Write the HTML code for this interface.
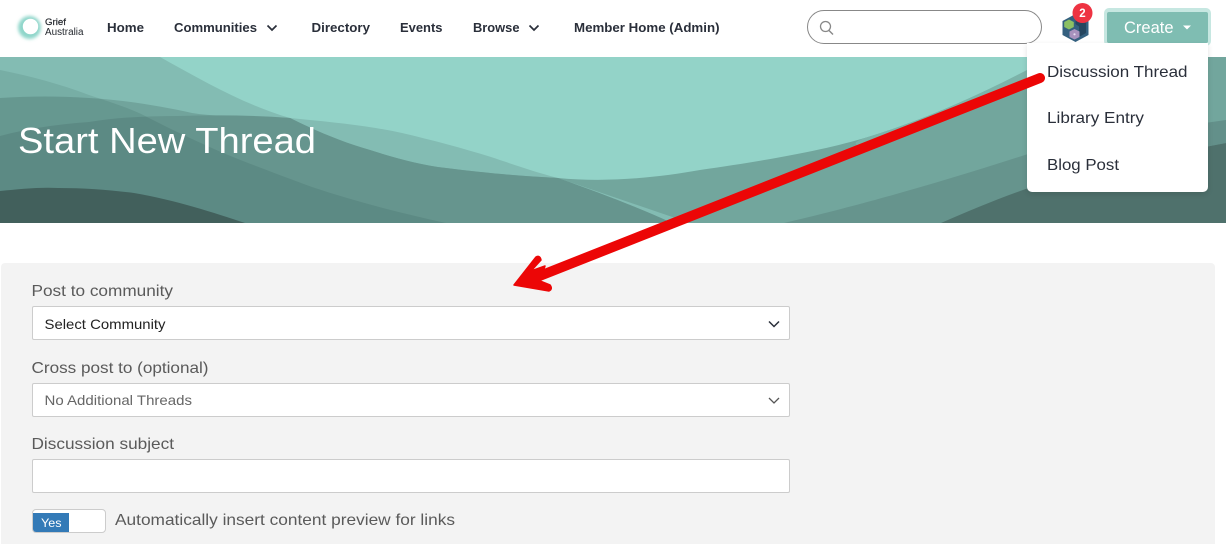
<!DOCTYPE html>
<html lang="en"><head><meta charset="utf-8"><title>Start New Thread</title>
<style>
html,body{margin:0;padding:0;background:#fff;width:1226px;height:544px;overflow:hidden;font-family:"Liberation Sans",sans-serif}
.a{position:absolute;box-sizing:border-box}
svg{position:absolute;left:0;top:0}
</style></head><body>
<svg width="1226" height="166" style="top:57px" viewBox="0 57 1226 166">
<rect x="0" y="57" width="1226" height="166" fill="#93d3c8"/>
<!-- right side below the light area -->
<path d="M558 178C610 183 660 177 700 170C770 160 825 150 868 137C930 118 985 92 1035 66L1050 57H1226V223H640Z" fill="#72a69d"/>
<path d="M860 146C930 125 985 100 1040 76V66L1035 66C985 92 930 118 868 137C855 141 852 144 860 146Z" fill="#7cb3a9"/>
<path d="M784 223C850 208 950 180 1040 150V223Z" fill="#66948d"/>
<path d="M941 223C975 208 1005 196 1040 184V223Z" fill="#4f716c"/>
<path d="M1030 150H1208V223H1030Z" fill="#4f716c"/>
<path d="M1205 57H1226V120L1205 123Z" fill="#72a69d"/>
<path d="M1205 123L1226 120V143L1205 147Z" fill="#63908a"/>
<path d="M1205 147L1226 143V223H1205Z" fill="#4f716c"/>
<!-- left: mid teal -->
<path d="M160 57C205 82 245 105 290 118C330 122 365 125 402 133C432 140 462 148 491 157C515 165 535 172 558 178L690 223H0V57Z" fill="#83bcb3"/>
<!-- layer L3 -->
<path d="M0 98C30 96 60 96 89 98C125 100 160 106 192 113C225 118 258 116 290 118C316 131 342 142 370 150C395 158 420 165 446 168C485 173 520 176 558 178C600 193 640 208 672 223H0Z" fill="#71a49c"/>
<!-- W wave -->
<path d="M0 136C30 128 60 124 89 122C120 117 150 116 178 116C215 115 252 115 290 118C316 131 342 142 370 150C395 158 420 165 446 168C485 173 520 176 558 178C600 193 640 208 672 223H0Z" fill="#66958e"/>
<!-- diagonal shade at the left -->
<path d="M0 70C30 76 60 84 89 95C110 102 130 108 147 117C172 130 198 142 223 153C255 166 285 177 312 187C357 202 400 213 446 223H0Z" fill="#002020" opacity=".09"/>
<path d="M0 191C20 189 40 187 58 188C85 188 110 190 134 193C175 200 215 213 245 223H0Z" fill="#42605c"/>
</svg>

<div class="a" style="left:1px;top:263px;width:1214px;height:281px;background:#f3f3f3;border-radius:4px 4px 0 0"></div>
<div class="a" style="left:32px;top:306px;width:758px;height:34px;background:#fff;border:1px solid #ccc;border-radius:2px"></div>
<div class="a" style="left:32px;top:383px;width:758px;height:34px;background:#fff;border:1px solid #ccc;border-radius:2px"></div>
<div class="a" style="left:32px;top:459px;width:758px;height:34px;background:#fff;border:1px solid #ccc;border-radius:2px"></div>
<div class="a" style="left:32px;top:509px;width:74px;height:24px;background:#fff;border:1px solid #ccc;border-radius:4px"></div>
<div class="a" style="left:33px;top:513px;width:36px;height:19px;background:#337ab7;border-radius:0 0 0 3px"></div>

<div class="a" style="left:807px;top:10px;width:235px;height:34px;background:#fff;border:1px solid #888;border-radius:17px"></div>
<div class="a" style="left:1104px;top:8px;width:107px;height:38px;background:#c6e7e1;border-radius:5px"></div>
<div class="a" style="left:1107px;top:12px;width:101px;height:31px;background:#7fbdb2;border-radius:2px"></div>
<div class="a" style="left:1027px;top:43px;width:181px;height:149px;background:#fff;border-radius:0 0 5px 5px;box-shadow:0 2px 6px rgba(0,0,0,.12)"></div>

<svg width="1226" height="544" viewBox="0 0 1226 544">
<defs><filter id="g" x="-40%" y="-40%" width="180%" height="180%"><feGaussianBlur stdDeviation="1.6"/></filter></defs>
<!-- logo -->
<circle cx="29.500" cy="27.500" r="11.500" fill="#8fd6ca" filter="url(#g)"/>
<circle cx="30.500" cy="26.500" r="7.700" fill="#fff"/>
<text x="45" y="25" font-size="9.500" fill="#25292f" stroke="#25292f" stroke-width=".2" textLength="21" lengthAdjust="spacingAndGlyphs">Grief</text>
<text x="45" y="35" font-size="10" fill="#25292f" textLength="38.500" lengthAdjust="spacingAndGlyphs">Australia</text>
<!-- nav -->
<g font-size="13" font-weight="bold" fill="#2a2f3a">
<text x="107" y="32" textLength="37" lengthAdjust="spacingAndGlyphs">Home</text>
<text x="174" y="32" textLength="83" lengthAdjust="spacingAndGlyphs">Communities</text>
<text x="311.500" y="32" textLength="58.500" lengthAdjust="spacingAndGlyphs">Directory</text>
<text x="400" y="32" textLength="42.500" lengthAdjust="spacingAndGlyphs">Events</text>
<text x="473" y="32" textLength="46.500" lengthAdjust="spacingAndGlyphs">Browse</text>
<text x="574" y="32" textLength="145.500" lengthAdjust="spacingAndGlyphs">Member Home (Admin)</text>
</g>
<path d="M267.500 25.500L272 30L276.500 25.500M529.500 25.500L534 30L538.500 25.500" fill="none" stroke="#2a2f3a" stroke-width="1.700"/>
<!-- search -->
<circle cx="825.500" cy="26.500" r="5" fill="none" stroke="#888" stroke-width="1.300"/>
<path d="M829 30.500L833 34.500" stroke="#888" stroke-width="1.400"/>
<!-- avatar -->
<path d="M1075.500 14L1088.500 21V35L1075.500 42L1062.500 35V21Z" fill="#34607f"/>
<path d="M1075.500 17L1086 23V33L1079 37V26.500L1075.500 24Z" fill="#25465f"/>
<path d="M1069 19.500L1073.800 22V27L1069 29.500L1064.200 27V22Z" fill="#8cc063"/>
<path d="M1074.500 29L1079.500 31.500V37L1074.500 39.500L1069.500 37V31.500Z" fill="#a892bd"/>
<circle cx="1074.500" cy="34.300" r="1.100" fill="#e6dcef"/>
<circle cx="1082.500" cy="13" r="10" fill="#ee3342"/>
<text x="1082.500" y="17" font-size="11.500" font-weight="bold" fill="#fff" text-anchor="middle">2</text>
<!-- create -->
<text x="1124" y="33" font-size="17" fill="#fff" textLength="49.500" lengthAdjust="spacingAndGlyphs">Create</text>
<path d="M1183 25.500H1191L1187 29.500Z" fill="#fff"/>
<!-- dropdown -->
<g font-size="16" fill="#2a2f3a">
<text x="1047" y="77" textLength="140.500" lengthAdjust="spacingAndGlyphs">Discussion Thread</text>
<text x="1047" y="123" textLength="97" lengthAdjust="spacingAndGlyphs">Library Entry</text>
<text x="1047" y="170" textLength="72" lengthAdjust="spacingAndGlyphs">Blog Post</text>
</g>
<!-- title -->
<text x="18" y="153" font-size="36" fill="#fff" textLength="298" lengthAdjust="spacingAndGlyphs">Start New Thread</text>
<!-- form -->
<g font-size="16" fill="#5a5a5a">
<text x="31.500" y="296" textLength="141.500" lengthAdjust="spacingAndGlyphs">Post to community</text>
<text x="31.500" y="373" textLength="177" lengthAdjust="spacingAndGlyphs">Cross post to (optional)</text>
<text x="31.500" y="449" textLength="142.500" lengthAdjust="spacingAndGlyphs">Discussion subject</text>
<text x="115" y="525" textLength="340" lengthAdjust="spacingAndGlyphs">Automatically insert content preview for links</text>
</g>
<text x="44.500" y="329" font-size="14" fill="#222" textLength="121" lengthAdjust="spacingAndGlyphs">Select Community</text>
<text x="44.500" y="405" font-size="14" fill="#666" textLength="147.500" lengthAdjust="spacingAndGlyphs">No Additional Threads</text>
<text x="41" y="527" font-size="12" fill="#fff" textLength="20.500" lengthAdjust="spacingAndGlyphs">Yes</text>
<path d="M769 321.500L774 326.500L779 321.500" fill="none" stroke="#2a2f3a" stroke-width="1.500"/>
<path d="M769 398L774 403L779 398" fill="none" stroke="#555" stroke-width="1.300"/>
<!-- arrow -->
<path d="M1040 78L532 279" fill="none" stroke="#ec0606" stroke-width="10" stroke-linecap="round"/>
<path d="M514 285L536 257Q540 255 541 260L531 271L545 266L540 281L550 285Q553 289 549 291Z" fill="#ec0606" stroke="#ec0606" stroke-width="1.500" stroke-linejoin="round"/>
</svg>
</body></html>
